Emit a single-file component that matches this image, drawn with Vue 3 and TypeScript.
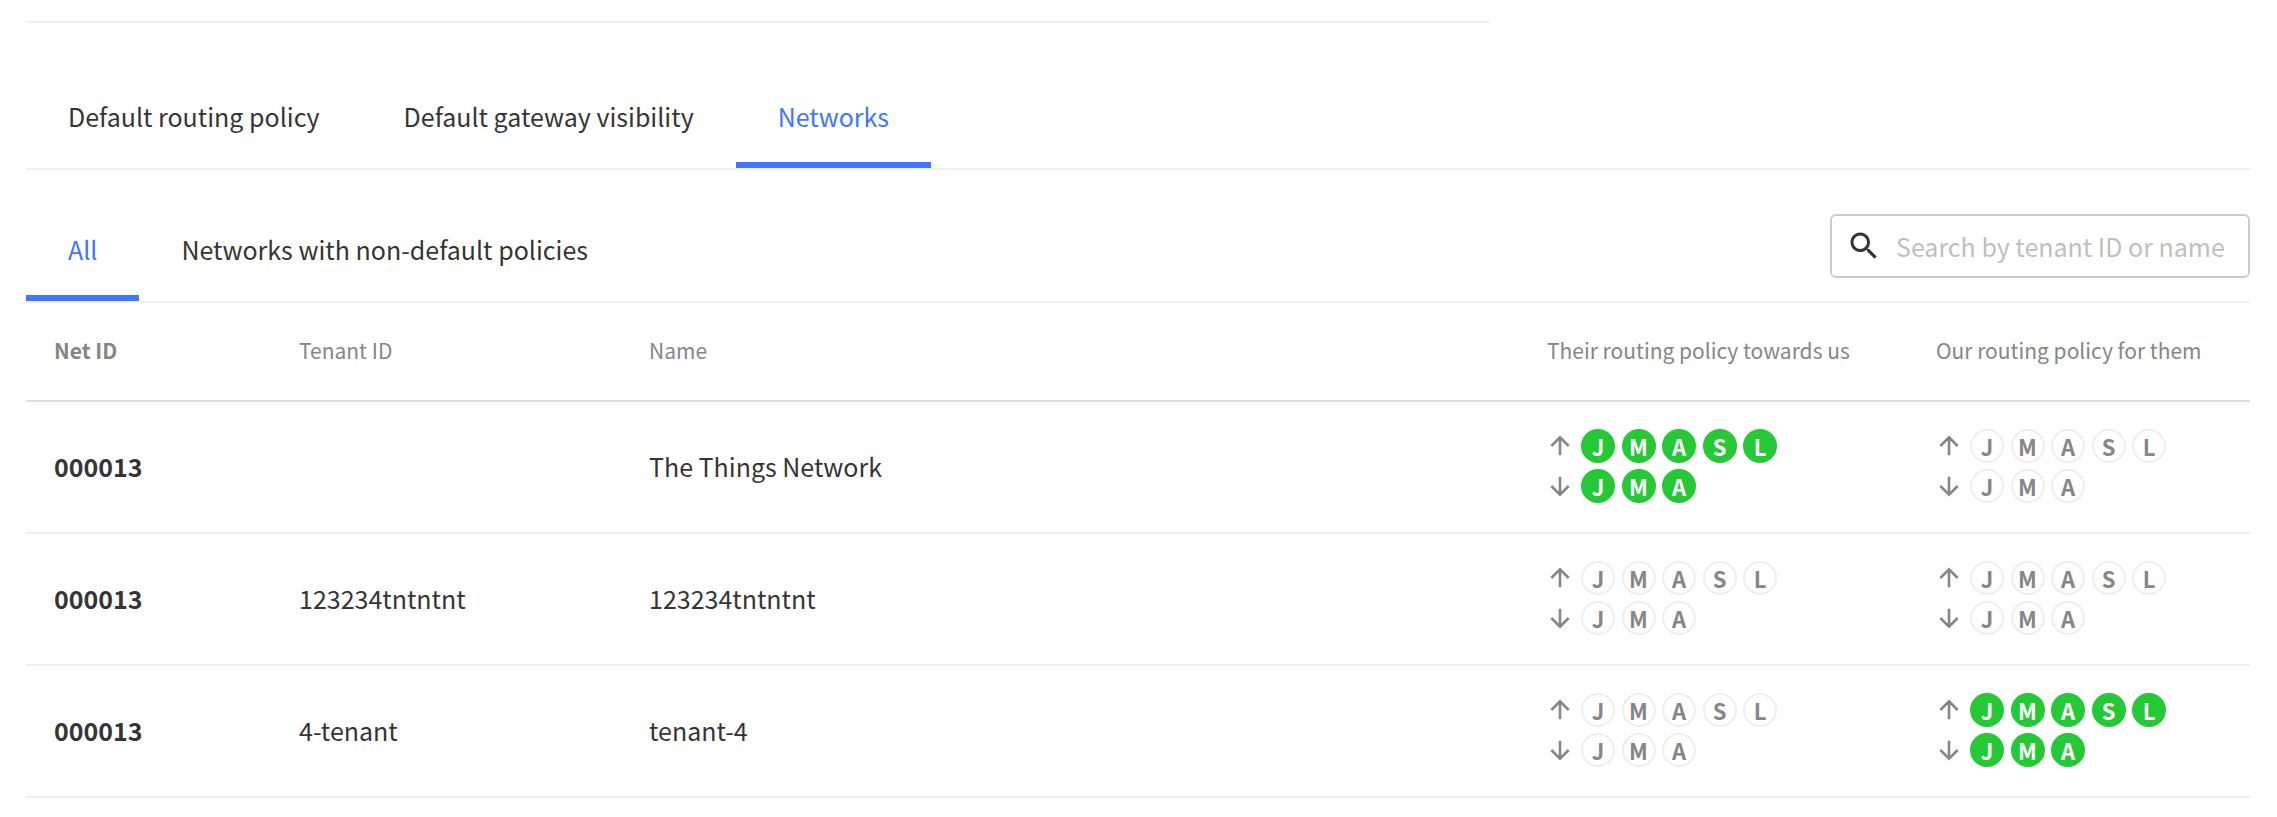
<script setup lang="ts">
import { ref } from 'vue'

interface Policy {
  up: boolean
  down: boolean
}

interface Network {
  netId: string
  tenantId: string
  name: string
  theirs: Policy
  ours: Policy
}

const sections = ['Default routing policy', 'Default gateway visibility', 'Networks']
const filters = ['All', 'Networks with non-default policies']
const activeSection = ref('Networks')
const activeFilter = ref('All')
const query = ref('')

const uplink = ['J', 'M', 'A', 'S', 'L']
const downlink = ['J', 'M', 'A']
const none: Policy = { up: false, down: false }
const full: Policy = { up: true, down: true }

const networks: Network[] = [
  { netId: '000013', tenantId: '', name: 'The Things Network', theirs: full, ours: none },
  { netId: '000013', tenantId: '123234tntntnt', name: '123234tntntnt', theirs: none, ours: none },
  { netId: '000013', tenantId: '4-tenant', name: 'tenant-4', theirs: none, ours: full },
]

const directions = (policy: Policy) => [
  { key: 'up', letters: uplink, on: policy.up, path: 'M12 20.5V4M4 12L12 4L20 12' },
  { key: 'down', letters: downlink, on: policy.down, path: 'M12 3.5V20M4 12L12 20L20 12' },
]
</script>

<template>
  <main class="page">
    <hr class="divider" />

    <nav class="tabs sections" aria-label="Sections">
      <button
        v-for="tab in sections"
        :key="tab"
        type="button"
        class="tab"
        :class="{ active: tab === activeSection }"
        @click="activeSection = tab"
      >{{ tab }}</button>
    </nav>

    <div class="toolbar">
      <nav class="tabs" aria-label="Filters">
        <button
          v-for="tab in filters"
          :key="tab"
          type="button"
          class="tab"
          :class="{ active: tab === activeFilter }"
          @click="activeFilter = tab"
        >{{ tab }}</button>
      </nav>
      <label class="search">
        <svg class="search-icon" viewBox="0 0 24 24" aria-hidden="true">
          <path
            d="M15.5 14h-.79l-.28-.27C15.41 12.59 16 11.11 16 9.5 16 5.91 13.09 3 9.5 3S3 5.91 3 9.5 5.91 16 9.5 16c1.61 0 3.09-.59 4.23-1.57l.27.28v.79l5 4.99L20.49 19l-4.99-5zm-6 0C7.01 14 5 11.99 5 9.5S7.01 5 9.5 5 14 7.01 14 9.5 11.99 14 9.5 14z"
          />
        </svg>
        <input v-model="query" type="text" placeholder="Search by tenant ID or name" aria-label="Search by tenant ID or name" />
      </label>
    </div>

    <table class="networks">
      <colgroup>
        <col class="col-net" />
        <col class="col-tenant" />
        <col />
        <col class="col-theirs" />
        <col class="col-ours" />
      </colgroup>
      <thead>
        <tr>
          <th class="strong">Net ID</th>
          <th>Tenant ID</th>
          <th>Name</th>
          <th>Their routing policy towards us</th>
          <th>Our routing policy for them</th>
        </tr>
      </thead>
      <tbody>
        <tr v-for="(network, i) in networks" :key="i">
          <td class="strong">{{ network.netId }}</td>
          <td>{{ network.tenantId }}</td>
          <td>{{ network.name }}</td>
          <td v-for="(policy, p) in [network.theirs, network.ours]" :key="p">
            <div class="policy">
              <div v-for="dir in directions(policy)" :key="dir.key" class="direction">
                <svg class="arrow" viewBox="0 0 24 24" aria-hidden="true"><path :d="dir.path" /></svg>
                <div class="badges">
                  <span v-for="letter in dir.letters" :key="letter" class="badge" :class="{ on: dir.on }">{{ letter }}</span>
                </div>
              </div>
            </div>
          </td>
        </tr>
      </tbody>
    </table>
  </main>
</template>

<style>
body {
  margin: 0;
  background: #fff;
}
</style>

<style scoped>
.page {
  padding: 21px 27px 19px 26px;
  color: #353535;
  font-family: "Noto Sans CJK SC", "Noto Sans", sans-serif;
  font-size: 25px;
  line-height: 36px;
}

.divider {
  width: 1464px;
  max-width: 100%;
  height: 2px;
  margin: 0 0 46px;
  border: 0;
  background: #eee;
}

.tabs {
  display: flex;
}

.sections {
  border-bottom: 2px solid #f0f0f0;
}

.tab {
  box-sizing: border-box;
  height: 99px;
  padding: 0 42px;
  border: 0;
  border-bottom: 6px solid transparent;
  background: none;
  color: inherit;
  font: inherit;
  white-space: nowrap;
  cursor: pointer;
}

.tab.active {
  border-bottom-color: #3f76ff;
  color: #3f76ff;
}

.toolbar {
  display: flex;
  align-items: flex-end;
  justify-content: space-between;
  height: 131px;
  border-bottom: 2px solid #f0f0f0;
}

.search {
  display: flex;
  box-sizing: border-box;
  align-items: center;
  gap: 14px;
  width: 420px;
  height: 64px;
  margin-bottom: 23px;
  padding: 0 14px;
  border: 2px solid #cbcbcb;
  border-radius: 6px;
}

.search-icon {
  flex: none;
  width: 36px;
  height: 36px;
  fill: #353535;
}

.search input {
  flex: 1;
  min-width: 0;
  padding: 0;
  border: 0;
  outline: 0;
  background: none;
  color: inherit;
  font: inherit;
}

.search input::placeholder {
  color: #bfbfbf;
  opacity: 1;
}

.networks {
  width: 100%;
  border-collapse: separate;
  border-spacing: 0;
  table-layout: fixed;
}

.col-net {
  width: 245px;
}

.col-tenant {
  width: 350px;
}

.col-theirs {
  width: 389px;
}

.col-ours {
  width: 342px;
}

.networks th {
  height: 93px;
  padding: 0 28px 4px;
  border-bottom: 2px solid #dedede;
  color: #868686;
  font-size: 21px;
  font-weight: 400;
  text-align: left;
  white-space: nowrap;
}

.networks td {
  height: 128px;
  padding: 0 28px 2px;
  border-bottom: 2px solid #eee;
}

.networks .strong {
  font-weight: 700;
}

.policy {
  display: grid;
  gap: 6px;
}

.direction {
  display: flex;
  align-items: center;
  gap: 8px;
}

.arrow {
  width: 26px;
  height: 26px;
  fill: none;
  stroke: #868686;
  stroke-width: 2.4;
}

.badges {
  display: grid;
  grid-template-columns: repeat(5, 34px);
  justify-content: space-between;
  width: 196px;
}

.badge {
  display: flex;
  box-sizing: border-box;
  align-items: center;
  justify-content: center;
  height: 34px;
  border: 2px solid #eee;
  border-radius: 50%;
  color: #868686;
  font-size: 22px;
  font-weight: 700;
  line-height: 30px;
}

.badge.on {
  border-color: #25c935;
  background: #25c935;
  color: #fff;
}
</style>
